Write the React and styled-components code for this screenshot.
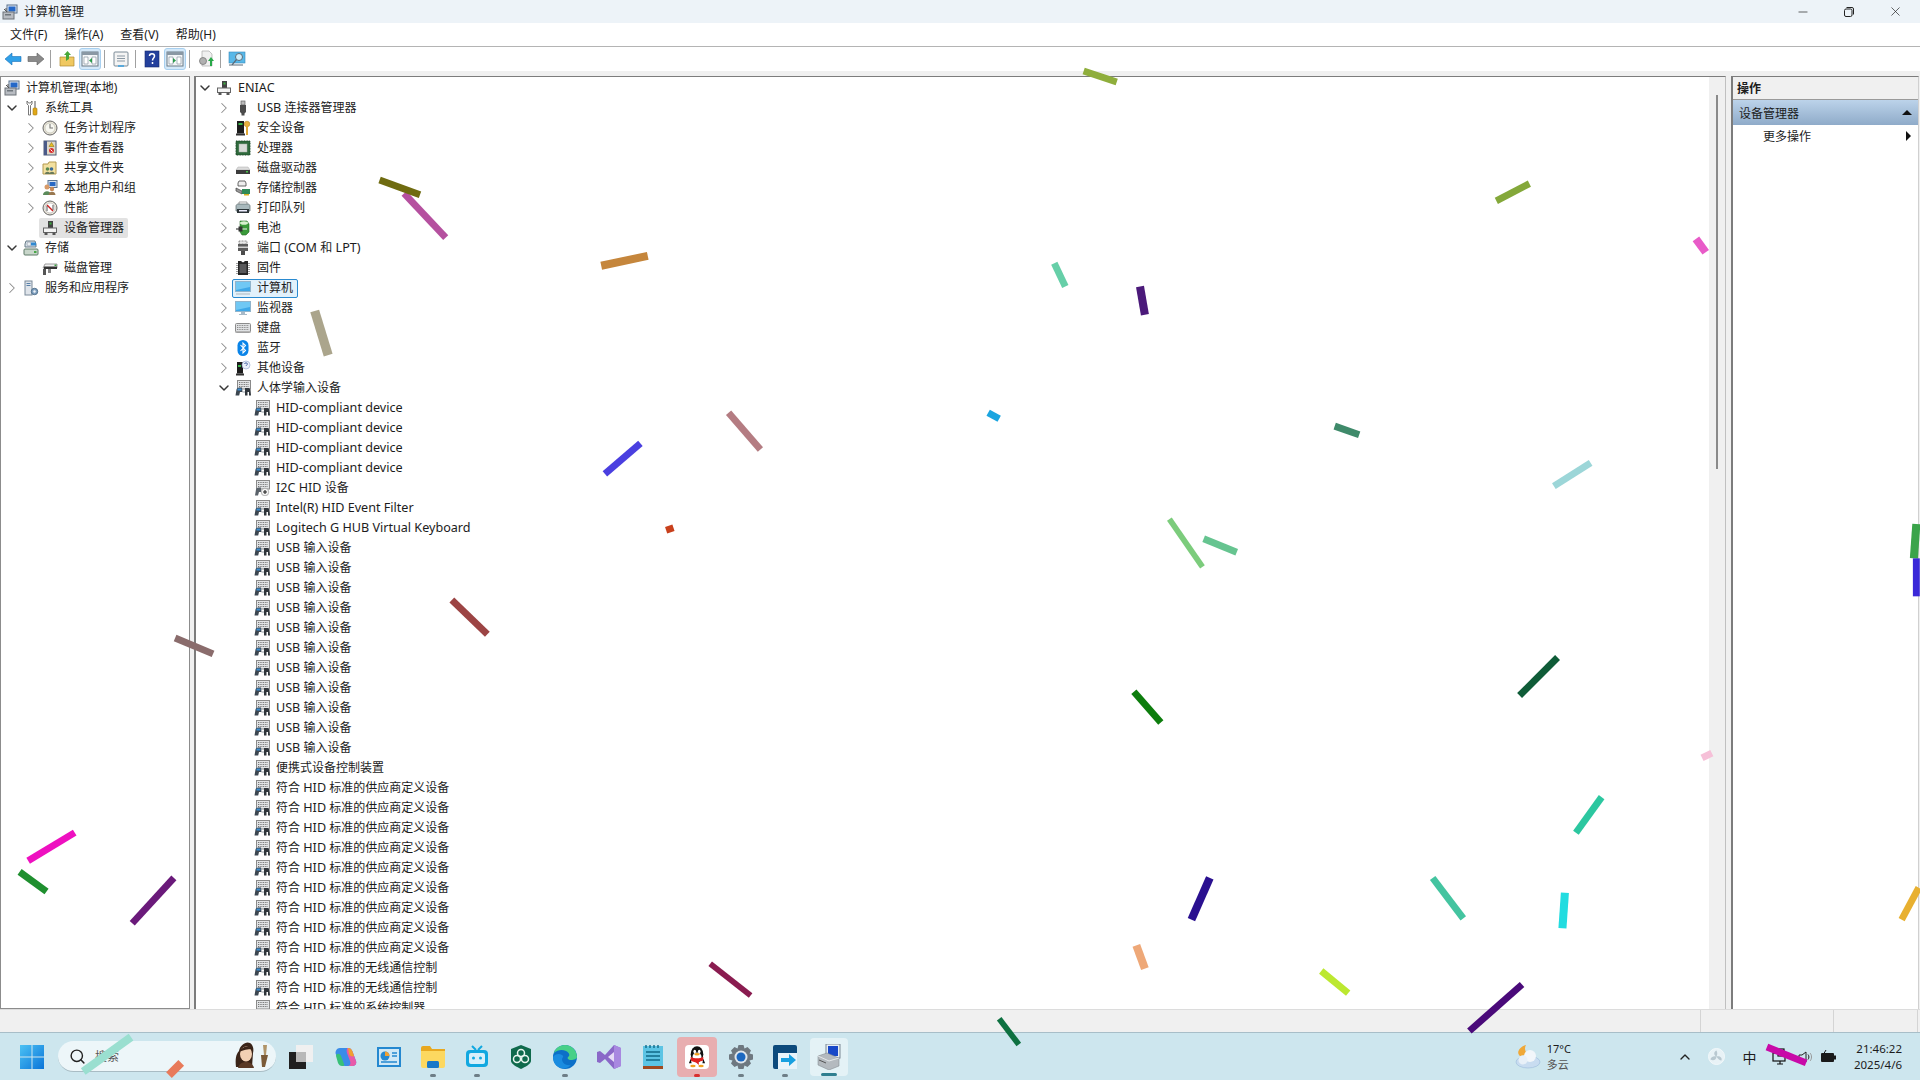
import React from 'react'
import styled, { createGlobalStyle } from 'styled-components'
import { ChevronRight, ChevronDown, ChevronUp, Search, Minus, X } from 'lucide-react'

const FONT = '"Noto Sans", "Noto Sans CJK SC", sans-serif'

const GlobalStyle = createGlobalStyle`
  html, body { margin: 0; padding: 0; width: 1920px; height: 1080px; overflow: hidden; background: #f0f0f0; }
  body { font-family: ${FONT}; font-size: 12px; color: #1c1c1c; }
`

const Svg = ({ size = 16, box = 16, children }) => (
  <svg width={size} height={size} viewBox={`0 0 ${box} ${box}`} style={{ display: 'block', flex: 'none' }}>
    {children}
  </svg>
)

/* ---------- tree icons ---------- */
const MgmtIcon = () => (
  <Svg>
    <rect x="5" y="1" width="10" height="8" fill="#e4eaf2" stroke="#58708c" />
    <rect x="6.500" y="2.500" width="7" height="5" fill="#2468c8" />
    <rect x="1" y="8" width="11" height="7" fill="#b8bcc2" stroke="#6c7278" />
    <rect x="3" y="10" width="6" height="1.500" fill="#6f767c" />
    <path d="M2 5l3 3M4 4v3" stroke="#555" />
  </Svg>
)
const ToolsIcon = () => (
  <Svg>
    <path d="M4 1v3l1.500 1.500V15h2V5.500L9 4V1L7.500 3h-2z" fill="#fff" stroke="#6a6a6a" strokeWidth=".9" />
    <rect x="11" y="1" width="2" height="7" fill="#a8a8a8" />
    <rect x="10" y="8" width="4" height="7" rx="1" fill="#e0a818" stroke="#a57a10" strokeWidth=".6" />
  </Svg>
)
const ClockIcon = () => (
  <Svg>
    <circle cx="8" cy="8" r="7" fill="#e8e4d8" stroke="#666" />
    <circle cx="8" cy="8" r="5" fill="#f8f8f2" stroke="#b8b8a8" strokeWidth=".6" />
    <path d="M8 4v4h3" fill="none" stroke="#777" strokeWidth="1.100" />
  </Svg>
)
const LogIcon = () => (
  <Svg>
    <rect x="2" y="1" width="12" height="14" fill="#ded8c8" stroke="#505c78" />
    <rect x="2" y="1" width="3" height="14" fill="#4a5a88" />
    <path d="M9.500 2.500l2.500 4H7z" fill="#e8c020" stroke="#80660a" strokeWidth=".5" />
    <circle cx="9.500" cy="10.500" r="2.500" fill="#d83030" />
    <path d="M8.500 9.500l2 2" stroke="#fff" />
  </Svg>
)
const SharedIcon = () => (
  <Svg>
    <path d="M1 4h5l1-2h7v12H1z" fill="#f2e0a0" stroke="#b49a50" />
    <circle cx="5.500" cy="9" r="1.800" fill="#5a8a50" />
    <circle cx="9.500" cy="9" r="1.800" fill="#3a6a98" />
    <path d="M3 14c0-3 5-3 5 0zM7.500 14c0-3 5-3 5 0z" fill="#6a7a58" />
  </Svg>
)
const UsersIcon = () => (
  <Svg>
    <rect x="6" y="0.500" width="9" height="7" fill="#d8e2ee" stroke="#5c7694" />
    <rect x="7.500" y="2" width="6" height="4" fill="#2868c4" />
    <circle cx="5" cy="7" r="2.500" fill="#d89a68" />
    <path d="M1 15c0-5 8-5 8 0z" fill="#5a8a5a" />
    <circle cx="10" cy="9" r="2.200" fill="#c88a58" />
    <path d="M6.500 15c0-4.500 7-4.500 7 0z" fill="#987850" />
  </Svg>
)
const PerfIcon = () => (
  <Svg>
    <circle cx="8" cy="8" r="7" fill="#eee8dc" stroke="#666" />
    <circle cx="8" cy="8" r="5" fill="#fff" stroke="#aaa" strokeWidth=".6" />
    <path d="M5 5l6 6" stroke="#d02020" strokeWidth="1.400" />
    <path d="M5 11V6M11 5v5" stroke="#444" strokeWidth=".9" />
  </Svg>
)
const DevMgrIcon = () => (
  <Svg>
    <rect x="6" y="1" width="5" height="7" fill="#444" />
    <rect x="7.500" y="2.500" width="2" height="2" fill="#3cb040" />
    <rect x="1.500" y="8" width="13" height="4.500" fill="#f4f4f4" stroke="#666" />
    <rect x="2.500" y="12.500" width="3" height="2.500" fill="#555" />
    <rect x="10.500" y="12.500" width="3" height="2.500" fill="#555" />
  </Svg>
)
const StorageIcon = () => (
  <Svg>
    <path d="M3 1h9l1 3v3H2V4z" fill="#d4e0e8" stroke="#6a7c88" />
    <circle cx="6" cy="4" r="2" fill="#e8eef2" stroke="#889" strokeWidth=".5" />
    <rect x="8" y="2.500" width="5" height="3" fill="#3088d0" />
    <rect x="1" y="9" width="14" height="6" rx="1" fill="#c8d6ca" stroke="#5f7a68" />
    <rect x="11" y="11" width="2.500" height="2" fill="#48a848" />
  </Svg>
)
const DiskMgmtIcon = () => (
  <Svg>
    <path d="M3 4h12v4H1z" fill="#f2f2f2" stroke="#777" strokeWidth=".7" />
    <rect x="2" y="6.500" width="13" height="2.500" fill="#333" />
    <rect x="12.500" y="4.500" width="2" height="1.500" fill="#3aa040" />
    <rect x="1" y="9" width="3" height="6" fill="#555" />
    <rect x="6" y="9" width="3" height="4" fill="#888" />
  </Svg>
)
const ServicesIcon = () => (
  <Svg>
    <rect x="2" y="1" width="7" height="14" fill="#dfe4ea" stroke="#7a8a9a" />
    <path d="M3.500 3.500h4M3.500 5.500h4" stroke="#5880a8" />
    <circle cx="11.500" cy="11.500" r="3.200" fill="#80a0c0" stroke="#50708c" />
    <circle cx="11.500" cy="11.500" r="1.200" fill="#eef3f8" />
  </Svg>
)
const UsbIcon = () => (
  <Svg>
    <rect x="6" y="1" width="4" height="4" fill="#bbb" stroke="#666" strokeWidth=".7" />
    <path d="M5 5h6v7l-1.500 1.500v2h-3v-2L5 12z" fill="#4c4c4c" />
  </Svg>
)
const SecurityIcon = () => (
  <Svg>
    <rect x="2" y="1" width="7" height="12.500" fill="#1c1c1c" />
    <rect x="3.500" y="3" width="4" height="2" fill="#38b848" />
    <rect x="1" y="13.500" width="9" height="2" fill="#333" />
    <circle cx="12" cy="4" r="2.800" fill="#e8b040" stroke="#a87a18" strokeWidth=".5" />
    <rect x="11" y="6" width="2" height="9" fill="#e0a838" />
  </Svg>
)
const CpuIcon = () => (
  <Svg>
    <rect x="1" y="1" width="14" height="14" fill="#2e6a3c" stroke="#1e4a2a" strokeDasharray="1 .6" />
    <rect x="4" y="4" width="8" height="8" fill="#d8dcd8" stroke="#a8b0a8" strokeWidth=".5" />
  </Svg>
)
const DriveIcon = () => (
  <Svg>
    <path d="M3 7h10l2 3H1z" fill="#dcdcdc" stroke="#aaa" strokeWidth=".5" />
    <rect x="1" y="10" width="14" height="4" fill="#3c3c3c" />
    <rect x="11" y="11" width="2" height="1.500" fill="#48c048" />
  </Svg>
)
const StoreCtrlIcon = () => (
  <Svg>
    <path d="M4 1h6l1 2v3H3V3z" fill="#eee" stroke="#444" strokeWidth=".8" />
    <path d="M1 8l6 3v3l-6-3z" fill="#999" stroke="#444" strokeWidth=".7" />
    <rect x="7" y="9" width="8" height="5" fill="#2f8a58" />
    <rect x="9" y="14" width="5" height="1.500" fill="#d8b020" />
  </Svg>
)
const PrinterIcon = () => (
  <Svg>
    <path d="M4 2h8v3H4z" fill="#fff" stroke="#777" strokeWidth=".7" />
    <path d="M1 6c0-1 1-2 2-2h10c1 0 2 1 2 2v5H1z" fill="#a8b8bc" stroke="#5a686c" strokeWidth=".7" />
    <rect x="2" y="9" width="12" height="4" fill="#2c3438" />
    <rect x="4" y="10" width="8" height="1.500" fill="#eef" />
  </Svg>
)
const BatteryIcon = () => (
  <Svg>
    <path d="M5 1h7l2 3v8l-3 3H7L5 12z" fill="#3a9a3a" stroke="#2a6a2a" strokeWidth=".6" />
    <ellipse cx="9" cy="3" rx="4" ry="1.800" fill="#d8f0d0" />
    <path d="M1 9h3" stroke="#444" strokeWidth="1.200" />
    <path d="M3.500 6.500h4v5h-4z" fill="#333" />
    <path d="M7.500 9H12" stroke="#eee" />
  </Svg>
)
const PortIcon = () => (
  <Svg>
    <rect x="4" y="1" width="8" height="3" fill="#e8e8e8" stroke="#666" strokeWidth=".7" strokeDasharray="1 .5" />
    <rect x="3" y="4" width="10" height="7" fill="#5c5c5c" />
    <rect x="3" y="6.500" width="10" height="1.500" fill="#d0d0d0" />
    <rect x="6" y="11" width="4" height="4" fill="#4c4c4c" />
  </Svg>
)
const FirmwareIcon = () => (
  <Svg>
    <path d="M3 1h3l2 1.500L10 1h3v14H3z" fill="#262626" />
    <rect x="4.500" y="4" width="7" height="9" fill="#58585a" />
    <path d="M2 3v11M14 3v11" stroke="#444" strokeDasharray="1 1" />
  </Svg>
)
const ScreenIcon = ({ base }) => (
  <Svg>
    <rect x="0.500" y="1.500" width="15" height="10" fill="#3ea8e8" stroke="#90b4cc" />
    <path d="M1 2h14v5C10 8 6 9 1 10z" fill="#70c8f4" />
    {base ? (
      <path d="M1 13h14v2H1z" fill="#c8d4dc" />
    ) : (
      <path d="M6 12h4v2h2v1H4v-1h2z" fill="#a8bac8" />
    )}
  </Svg>
)
const KeyboardIcon = () => (
  <Svg>
    <rect x="0.500" y="3.500" width="15" height="9" rx="1" fill="#e0e2e4" stroke="#8c8c8c" />
    <path d="M2 5.500h12M2 7.500h12M2 9.500h12" stroke="#8a8a8a" strokeDasharray="1 .7" />
    <rect x="0.500" y="11" width="15" height="1.500" fill="#b4b4b4" />
  </Svg>
)
const BluetoothIcon = () => (
  <Svg>
    <rect x="2.500" y="0" width="11" height="16" rx="5.500" fill="#0a84e8" />
    <path d="M5.500 5l5 5.500L8 13V3l2.500 2.500-5 5.500" fill="none" stroke="#fff" strokeWidth="1.100" />
  </Svg>
)
const OtherIcon = () => (
  <Svg>
    <rect x="2" y="2" width="6" height="11.500" fill="#1c1c1c" />
    <rect x="3" y="5" width="3" height="2" fill="#38b848" />
    <rect x="1" y="13.500" width="8" height="2" fill="#333" />
    <circle cx="11" cy="5" r="4" fill="#eaf0fa" stroke="#8ea4cc" strokeWidth=".6" />
    <path d="M9.500 4c0-1.500 3-1.500 3 0 0 1-1.500 1-1.500 2" fill="none" stroke="#3a5a9c" strokeWidth=".9" />
  </Svg>
)
const HidIcon = ({ overlay, faded }) => (
  <Svg>
    <rect x="2.500" y="0.500" width="13" height="8.500" fill="#e2e4e6" stroke="#8a8a8a" />
    <path d="M4 2.500h10M4 4.500h10M4 6.500h10" stroke="#777" strokeDasharray="1 .7" />
    {!faded && !overlay && (
      <>
        <path d="M0.500 15.500l1-6c.3-1.300 1.500-2 2.800-2H7l.5 4.500H5l-.8 3.500z" fill="#3c4650" />
        <path d="M2.500 8.500h4v2h-4z" fill="#3f8ed0" />
        <path d="M10 15.500V8h3.500c1 0 1.800.7 2 2l.5 5.500h-2V12h-1.500v3.500z" fill="#30363c" />
        <path d="M7.500 12h2.500" stroke="#9aa2a8" />
      </>
    )}
    {overlay && (
      <>
        <path d="M1 15.500l1-6c.3-1.300 1.500-2 2.800-2H7v4.500H5l-1 3.500z" fill="#5a626a" />
        <circle cx="11" cy="12" r="3.800" fill="#f4f4f4" stroke="#888" strokeWidth=".6" />
        <path d="M9 12h4M11 10v4" stroke="#222" strokeWidth="1.100" />
      </>
    )}
  </Svg>
)

/* ---------- data ---------- */
const leftTree = [
  { label: '计算机管理(本地)', icon: <MgmtIcon />, indent: 3, slot: false },
  { label: '系统工具', icon: <ToolsIcon />, indent: 3, state: 'open' },
  { label: '任务计划程序', icon: <ClockIcon />, indent: 22, state: 'closed' },
  { label: '事件查看器', icon: <LogIcon />, indent: 22, state: 'closed' },
  { label: '共享文件夹', icon: <SharedIcon />, indent: 22, state: 'closed' },
  { label: '本地用户和组', icon: <UsersIcon />, indent: 22, state: 'closed' },
  { label: '性能', icon: <PerfIcon />, indent: 22, state: 'closed' },
  { label: '设备管理器', icon: <DevMgrIcon />, indent: 22, selected: 'gray' },
  { label: '存储', icon: <StorageIcon />, indent: 3, state: 'open' },
  { label: '磁盘管理', icon: <DiskMgmtIcon />, indent: 22 },
  { label: '服务和应用程序', icon: <ServicesIcon />, indent: 3, state: 'closed' },
]

const hid = (label, count = 1) =>
  Array.from({ length: count }, () => ({ label, icon: <HidIcon />, indent: 39 }))

const deviceTree = [
  { label: 'ENIAC', icon: <DevMgrIcon />, indent: 1, state: 'open' },
  { label: 'USB 连接器管理器', icon: <UsbIcon />, indent: 20, state: 'closed' },
  { label: '安全设备', icon: <SecurityIcon />, indent: 20, state: 'closed' },
  { label: '处理器', icon: <CpuIcon />, indent: 20, state: 'closed' },
  { label: '磁盘驱动器', icon: <DriveIcon />, indent: 20, state: 'closed' },
  { label: '存储控制器', icon: <StoreCtrlIcon />, indent: 20, state: 'closed' },
  { label: '打印队列', icon: <PrinterIcon />, indent: 20, state: 'closed' },
  { label: '电池', icon: <BatteryIcon />, indent: 20, state: 'closed' },
  { label: '端口 (COM 和 LPT)', icon: <PortIcon />, indent: 20, state: 'closed' },
  { label: '固件', icon: <FirmwareIcon />, indent: 20, state: 'closed' },
  { label: '计算机', icon: <ScreenIcon base />, indent: 20, state: 'closed', selected: 'blue' },
  { label: '监视器', icon: <ScreenIcon />, indent: 20, state: 'closed' },
  { label: '键盘', icon: <KeyboardIcon />, indent: 20, state: 'closed' },
  { label: '蓝牙', icon: <BluetoothIcon />, indent: 20, state: 'closed' },
  { label: '其他设备', icon: <OtherIcon />, indent: 20, state: 'closed' },
  { label: '人体学输入设备', icon: <HidIcon />, indent: 20, state: 'open' },
  ...hid('HID-compliant device', 4),
  { label: 'I2C HID 设备', icon: <HidIcon overlay />, indent: 39 },
  ...hid('Intel(R) HID Event Filter'),
  ...hid('Logitech G HUB Virtual Keyboard'),
  ...hid('USB 输入设备', 11),
  ...hid('便携式设备控制装置'),
  ...hid('符合 HID 标准的供应商定义设备', 9),
  ...hid('符合 HID 标准的无线通信控制', 2),
  { label: '符合 HID 标准的系统控制器', icon: <HidIcon faded />, indent: 39 },
]

// endpoints measured on the 1568 wide picture
const confetti = [
  [885, 58, 912, 67, 6, '#8fae3c'],
  [330, 158, 364, 194, 6, '#b5509f'],
  [310, 147, 343, 159, 6, '#6f6b10'],
  [1222, 164, 1249, 150, 6, '#84a83a'],
  [1385, 195, 1393, 206, 7, '#e85bc8'],
  [491, 217, 529, 209, 7, '#c5863c'],
  [861, 215, 870, 234, 6, '#66cfa8'],
  [931, 234, 935, 257, 7, '#4b1a7a'],
  [257, 254, 268, 290, 8, '#aba58c'],
  [807, 337, 816, 342, 6, '#1ba5e0'],
  [1090, 348, 1110, 355, 6, '#3f8a6a'],
  [1269, 397, 1299, 378, 6, '#9cd6d8'],
  [595, 337, 621, 367, 6, '#b47c82'],
  [494, 387, 523, 362, 6, '#4a3fe0'],
  [544, 433, 550, 431, 6, '#c8401c'],
  [955, 424, 982, 463, 5, '#7ccc7c'],
  [983, 440, 1010, 451, 6, '#66c490'],
  [1565, 428, 1563, 456, 7, '#3aa44a'],
  [1565, 456, 1565, 487, 6, '#3a28d8'],
  [369, 490, 398, 518, 6, '#9c4444'],
  [143, 521, 174, 534, 6, '#8a6c6c'],
  [1241, 568, 1272, 537, 6, '#0f5c38'],
  [926, 565, 948, 590, 6, '#0d7d0d'],
  [1390, 619, 1398, 615, 6, '#f6c0d8'],
  [1287, 680, 1308, 651, 6, '#2cc7a0'],
  [23, 703, 61, 680, 6, '#ee10c0'],
  [16, 712, 38, 728, 6, '#1f8f2f'],
  [108, 754, 142, 717, 6, '#6a1a7a'],
  [973, 751, 988, 717, 7, '#2a1090'],
  [1170, 717, 1195, 750, 6, '#44c4a0'],
  [1278, 729, 1276, 758, 7, '#22dce0'],
  [1553, 751, 1567, 725, 6, '#e8b030'],
  [928, 772, 935, 791, 7, '#eea878'],
  [1079, 793, 1101, 811, 6, '#bce830'],
  [580, 787, 613, 813, 5, '#8a1c50'],
  [1200, 842, 1243, 804, 6, '#4a0a7a'],
  [816, 832, 832, 853, 5, '#0d7040'],
  [68, 875, 107, 847, 7, '#9adfd0'],
  [138, 878, 148, 868, 7, '#e87a5a'],
  [1443, 855, 1475, 868, 6, '#c80aa8'],
]
const SCALE = 1920 / 1568

/* ---------- chrome ---------- */
// the latin runs of the original font are a little wider than the CJK ones
const Runs = ({ text }) =>
  text.split(/([\x20-\x7e]+)/).filter(Boolean).map((run, i) =>
    /^[\x20-\x7e]+$/.test(run) && /[A-Za-z]/.test(run) ? <Latin key={i}>{run}</Latin> : <span key={i}>{run}</span>
  )

const Row = ({ item }) => (
  <TreeRow $indent={item.indent}>
    {item.slot !== false && (
      <Toggle>
        {item.state === 'open' && <ChevronDown size={16} strokeWidth={2.2} color="#383838" />}
        {item.state === 'closed' && <ChevronRight size={18} strokeWidth={1.4} color="#8c8c8c" />}
      </Toggle>
    )}
    <Item $selected={item.selected}>
      {item.icon}
      <Label><Runs text={item.label} /></Label>
    </Item>
  </TreeRow>
)

const ToolButton = ({ active, children }) => <ToolBtn $active={active}>{children}</ToolBtn>

const PaneIcon = ({ side }) => (
  <Svg box={18} size={18}>
    <rect x="1" y="2" width="16" height="14" fill="#f4f6f8" stroke="#6a7a86" />
    <rect x="1" y="2" width="16" height="3" fill="#8a98a4" />
    <path d="M3 7h4v7H3zM11 7h4v7h-4z" fill="#fff" stroke="#8a98a4" strokeWidth=".7" />
    <path d={side === 'left' ? 'M11 8v5L8 10.500z' : 'M7 8v5l3-2.500z'} fill="#2a9a4a" />
  </Svg>
)

export default function App() {
  return (
    <Screen>
      <GlobalStyle />
      <Window>
        <TitleBar>
          <MgmtIcon />
          <TitleText>计算机管理</TitleText>
          <WinButtons>
            <WinBtn><Minus size={14} strokeWidth={1.2} color="#222" /></WinBtn>
            <WinBtn>
              <svg width="12" height="12" viewBox="0 0 12 12">
                <rect x="1.500" y="3" width="7.500" height="7.500" rx="1.500" fill="none" stroke="#222" />
                <path d="M3.500 1.500h5.500a1.500 1.500 0 0 1 1.500 1.500v5.500" fill="none" stroke="#222" />
              </svg>
            </WinBtn>
            <WinBtn><X size={15} strokeWidth={1.1} color="#222" /></WinBtn>
          </WinButtons>
        </TitleBar>

        <MenuBar>
          {['文件(F)', '操作(A)', '查看(V)', '帮助(H)'].map((m) => (
            <MenuItem key={m}>{m}</MenuItem>
          ))}
        </MenuBar>

        <ToolBar>
          <ToolButton>
            <Svg box={18} size={18}><path d="M1 9l7-6v3.500h9v5H8V15z" fill="#30a0e8" stroke="#1a70b8" strokeWidth=".6" /></Svg>
          </ToolButton>
          <ToolButton>
            <Svg box={18} size={18}><path d="M17 9l-7-6v3.500H1v5h9V15z" fill="#8a8a8a" stroke="#5f5f5f" strokeWidth=".6" /></Svg>
          </ToolButton>
          <Sep />
          <ToolButton>
            <Svg box={18} size={18}>
              <path d="M2 7h14v9H2z" fill="#f0c860" stroke="#b08a30" strokeWidth=".7" />
              <path d="M8 11V5H6l3.500-4L13 5h-2v4z" fill="#48a838" />
            </Svg>
          </ToolButton>
          <ToolButton active><PaneIcon side="left" /></ToolButton>
          <Sep />
          <ToolButton>
            <Svg box={18} size={18}>
              <rect x="2" y="2" width="14" height="14" rx="1" fill="#f4f4f4" stroke="#7a8a96" />
              <path d="M5 6h8M5 8.500h8M5 11h8" stroke="#8a98a4" />
              <path d="M6 16h6" stroke="#38a0e0" strokeWidth="1.500" />
            </Svg>
          </ToolButton>
          <Sep />
          <ToolButton>
            <Svg box={18} size={18}>
              <rect x="2" y="1" width="14" height="16" fill="#24409c" />
              <rect x="2" y="1" width="14" height="16" fill="none" stroke="#142a70" strokeWidth=".6" />
              <path d="M6.500 6c0-3 5-3 5 0 0 2-2 2-2 4.500M9.500 12v2" fill="none" stroke="#fff" strokeWidth="1.500" />
            </Svg>
          </ToolButton>
          <ToolButton active><PaneIcon side="right" /></ToolButton>
          <Sep />
          <ToolButton>
            <Svg box={18} size={18}>
              <path d="M5 1h7l3 3v12H5z" fill="#f0f0f0" stroke="#aaa" strokeWidth=".7" />
              <circle cx="6" cy="11" r="3.500" fill="#b0b0b0" stroke="#777" strokeWidth=".8" />
              <path d="M14 7l3 4h-2v5h-2v-5h-2z" fill="#28a848" />
            </Svg>
          </ToolButton>
          <Sep />
          <ToolButton>
            <Svg box={18} size={18}>
              <rect x="1" y="2" width="16" height="11" fill="#58b8e8" stroke="#3888b8" strokeWidth=".6" />
              <circle cx="11" cy="7" r="3.500" fill="#d0eefa" stroke="#5a6a78" />
              <path d="M8.500 9.500L4 15H1M4 15h11" stroke="#5a6a78" strokeWidth="1.200" fill="none" />
            </Svg>
          </ToolButton>
        </ToolBar>

        <Main>
          <LeftPanel>
            {leftTree.map((item) => <Row key={item.label} item={item} />)}
          </LeftPanel>

          <CenterPanel>
            <DeviceList>
              {deviceTree.map((item, i) => <Row key={i} item={item} />)}
            </DeviceList>
            <ScrollTrack><ScrollThumb /></ScrollTrack>
          </CenterPanel>

          <ActionPanel>
            <ActionTitle>操作</ActionTitle>
            <ActionGroup>
              设备管理器
              <TriUp />
            </ActionGroup>
            <ActionItem>
              更多操作
              <TriRight />
            </ActionItem>
          </ActionPanel>
        </Main>

        <StatusBar>
          <StatusCell $w={133} />
          <StatusCell $w={85} />
        </StatusBar>
      </Window>

      <Taskbar>
        <StartSlot>
          <svg width="24" height="24" viewBox="0 0 24 24">
            <defs>
              <linearGradient id="win" x1="0" y1="0" x2="1" y2="1">
                <stop offset="0" stopColor="#4cc2f4" />
                <stop offset="1" stopColor="#0a74d8" />
              </linearGradient>
            </defs>
            <path d="M0 0h11.500v11.500H0zM12.500 0H24v11.500H12.500zM0 12.500h11.500V24H0zM12.500 12.500H24V24H12.500z" fill="url(#win)" />
          </svg>
        </StartSlot>
        <SearchBox>
          <Search size={17} strokeWidth={2} color="#222" />
          <SearchHint>搜索</SearchHint>
          <SearchArt>
            <svg width="38" height="28" viewBox="0 0 38 28">
              <path d="M2 27c-1-8 0-13 3-16C6 5 12 1 16 3c3 2 4 6 3 10l-1 14z" fill="#3a2418" />
              <ellipse cx="12" cy="14" rx="6" ry="7.500" fill="#f2d0b4" />
              <path d="M5 12c2-5 9-7 13-3-4 0-9 1-13 3z" fill="#3a2418" />
              <path d="M4 28c1-4 4-6 8-6s7 2 8 6z" fill="#5a3a26" />
              <path d="M29 5l4 0-1 10-2 0z" fill="#b09468" />
              <path d="M27 15l7 0-3 12-3 0z" fill="#7a5a38" />
            </svg>
          </SearchArt>
        </SearchBox>

        <TaskViewSlot>
          <svg width="24" height="24" viewBox="0 0 24 24">
            <rect x="7" y="0" width="17" height="17" fill="#f0f0f0" />
            <rect x="0" y="7" width="17" height="17" fill="#202020" />
            <path d="M7 7h10v10H7z" fill="#b8b8b8" />
          </svg>
        </TaskViewSlot>

        <AppSlot>
          <svg width="24" height="24" viewBox="0 0 24 24">
            <path d="M7 3h8c3 0 4 2 5 5l3 8c1 3-1 5-4 5h-7c-3 0-4-2-5-5L4 11C1 8 3 3 7 3z" fill="#3a8ce8" />
            <path d="M15 3c3 0 4 2 5 5l3 8c1 3-1 5-4 5h-5c3 0 4-2 3-5l-3-8c-1-3 0-5 1-5z" fill="#e85aa8" />
            <path d="M3 11c0-3 4-3 5 0l3 8c1 2-1 2-2 2-2 0-3-1-4-3z" fill="#38c078" />
            <path d="M15 3c2 0 4 1 5 5l1 3c-2 1-4 0-5-2z" fill="#f0a030" />
          </svg>
        </AppSlot>
        <AppSlot>
          <svg width="24" height="20" viewBox="0 0 24 20">
            <rect width="24" height="20" fill="#2488d0" />
            <rect x="2" y="2" width="20" height="16" fill="#cfe8f6" />
            <circle cx="8" cy="9" r="4.500" fill="#2488d0" />
            <path d="M8 4.500a4.500 4.500 0 0 1 4.500 4.500H8z" fill="#f0a030" />
            <path d="M15 6h5M15 9h5M4 15h16" stroke="#2488d0" strokeWidth="1.400" />
          </svg>
        </AppSlot>
        <AppSlot>
          <svg width="24" height="22" viewBox="0 0 24 22">
            <path d="M0 2a2 2 0 0 1 2-2h7l2 3h13v4H0z" fill="#e8a820" />
            <path d="M0 5h24v15a2 2 0 0 1-2 2H2a2 2 0 0 1-2-2z" fill="#fcd860" />
            <rect x="6" y="15" width="12" height="7" rx="1.500" fill="#1878c8" />
          </svg>
          <RunDot />
        </AppSlot>
        <AppSlot>
          <svg width="24" height="24" viewBox="0 0 24 24">
            <path d="M7 1l4 4M17 1l-4 4" stroke="#12a8e0" strokeWidth="2" />
            <rect x="1" y="5" width="22" height="17" rx="4" fill="#12a8e0" />
            <rect x="4" y="8" width="16" height="11" rx="2" fill="#d8f0fa" />
            <circle cx="8.500" cy="13" r="1.500" fill="#12a8e0" />
            <circle cx="15.500" cy="13" r="1.500" fill="#12a8e0" />
          </svg>
          <RunDot />
        </AppSlot>
        <AppSlot>
          <svg width="24" height="24" viewBox="0 0 24 24">
            <path d="M12 0l10 4v12c0 3-6 6-10 8-4-2-10-5-10-8V4z" fill="#0f6a4c" />
            <g fill="none" stroke="#eaf6f0" strokeWidth="1.500">
              <circle cx="12" cy="8" r="3.500" />
              <circle cx="8" cy="14" r="3.500" />
              <circle cx="16" cy="14" r="3.500" />
            </g>
          </svg>
        </AppSlot>
        <AppSlot>
          <svg width="24" height="24" viewBox="0 0 24 24">
            <circle cx="12" cy="12" r="12" fill="#0c70c8" />
            <path d="M24 12c0-6-5-12-12-12C6 0 2 4 1 8c3-3 8-4 12-2 4 2 4 5 2 6-1 1 0 3 3 3 3 0 6-1 6-3z" fill="#48d088" />
            <path d="M9 14c0 4 4 7 9 6-3 3-7 4-10 3-5-1-8-6-8-11 2-3 6-4 9-2 2 1 1 2 0 4z" fill="#1a8ce0" />
          </svg>
          <RunDot />
        </AppSlot>
        <AppSlot>
          <svg width="24" height="24" viewBox="0 0 24 24">
            <path d="M17 0l7 3v18l-7 3-9-10-5 4-3-1V7l3-1 5 4z" fill="#8a68c8" />
            <path d="M17 0l7 3v18l-7 3z" fill="#a888e0" />
            <path d="M17 7v10l-6-5z" fill="#e6dcf6" />
          </svg>
        </AppSlot>
        <AppSlot>
          <svg width="20" height="24" viewBox="0 0 20 24">
            <rect y="1" width="20" height="21" fill="#5cc4e4" />
            <path d="M3 0v3M7 0v3M11 0v3M15 0v3" stroke="#106a88" strokeWidth="1.400" />
            <path d="M3 7h14M3 11h14M3 15h14" stroke="#106a88" strokeWidth="1.500" />
            <rect y="21" width="20" height="3" fill="#a04a20" />
          </svg>
        </AppSlot>
        <QqSlot>
          <QqTile>
            <QqFace>
              <svg width="18" height="22" viewBox="0 0 20 24">
                <ellipse cx="10" cy="9" rx="7" ry="9" fill="#111" />
                <ellipse cx="10" cy="12" rx="5" ry="5" fill="#fff" />
                <ellipse cx="7.500" cy="6" rx="1.500" ry="2" fill="#fff" />
                <ellipse cx="12.500" cy="6" rx="1.500" ry="2" fill="#fff" />
                <ellipse cx="10" cy="9" rx="3" ry="1.400" fill="#f0a020" />
                <path d="M3 12c4 2 10 2 14 0v4c-2 1-4 1-5 1v4l-3-3c-3-.5-5-1-6-2z" fill="#e02020" />
                <path d="M3 14l-2 5 3 0zM17 14l2 5-3 0z" fill="#111" />
                <ellipse cx="5.500" cy="22" rx="3" ry="1.500" fill="#f0a020" />
                <ellipse cx="14.500" cy="22" rx="3" ry="1.500" fill="#f0a020" />
              </svg>
            </QqFace>
          </QqTile>
          <RunDot $color="#d83030" />
        </QqSlot>
        <AppSlot>
          <svg width="24" height="24" viewBox="0 0 24 24">
            <path d="M9.500 0h5l1 3.500 3-1.500 3.500 3.500-1.500 3L24 9.500v5l-3.500 1 1.500 3-3.500 3.500-3-1.500-1 3.500h-5l-1-3.500-3 1.500L2 18.500l1.500-3L0 14.500v-5l3.500-1-1.500-3L5.500 2l3 1.500z" fill="#6e7880" />
            <circle cx="12" cy="12" r="6.500" fill="#dfe6ec" />
            <circle cx="12" cy="12" r="4.500" fill="#1c68c0" />
          </svg>
          <RunDot />
        </AppSlot>
        <AppSlot>
          <svg width="24" height="24" viewBox="0 0 24 24">
            <path d="M2 0h20a2 2 0 0 1 2 2v6H5v16H2a2 2 0 0 1-2-2V2a2 2 0 0 1 2-2z" fill="#0c4a7c" />
            <rect x="5" y="8" width="19" height="16" fill="#e8f4fa" />
            <path d="M8 13h8V9l7 6-7 6v-4H8z" fill="#18a0e0" />
          </svg>
          <RunDot />
        </AppSlot>
        <ActiveSlot>
          <ActiveTile>
            <svg width="24" height="26" viewBox="0 0 24 26">
              <rect x="9" y="0" width="14" height="14" fill="#e8eef4" stroke="#7a8894" />
              <rect x="11" y="2" width="10" height="10" fill="#1848c8" />
              <path d="M1 12l9-3 12 5v8l-10 4-11-5z" fill="#b4babf" stroke="#7a8288" strokeWidth=".5" />
              <path d="M1 12l11 5 10-3" fill="none" stroke="#e4e8ea" />
              <path d="M2 16l7 3" stroke="#555" />
            </svg>
          </ActiveTile>
          <ActiveMark />
        </ActiveSlot>

        <Tray>
          <Weather>
            <svg width="26" height="24" viewBox="0 0 26 24">
              <path d="M11 0c-2 3-1 8 3 9l-9 2C1 8 4 2 11 0z" fill="#f0a838" />
              <ellipse cx="13" cy="17" rx="12" ry="6" fill="#c8dcf0" stroke="#9abada" strokeWidth=".6" />
              <circle cx="15" cy="11" r="6" fill="#f2f6fa" />
              <circle cx="8" cy="15" r="4.500" fill="#e8f0f8" />
            </svg>
            <WeatherText>
              <span>17°C</span>
              <WeatherSub>多云</WeatherSub>
            </WeatherText>
          </Weather>
          <TrayIcons>
            <TraySlot $w={32}><ChevronUp size={16} strokeWidth={2} color="#222" /></TraySlot>
            <TraySlot $w={32}>
              <svg width="17" height="17" viewBox="0 0 17 17">
                <circle cx="8.500" cy="8.500" r="8" fill="#e8f2f6" stroke="#f2f8fa" />
                <path d="M8.500 8.500c-3-1-3-5 0-6 1 2 1 4 0 6zm0 0c3-1 6 1 5 4-2 0-4-2-5-4zm0 0c0 3-3 5-6 3 0-2 3-4 6-3z" fill="#b8c8d0" />
              </svg>
            </TraySlot>
            <ImeText>中</ImeText>
            <TraySlot $w={30}>
              <svg width="18" height="18" viewBox="0 0 18 18" fill="none" stroke="#111" strokeWidth="1.200">
                <rect x="1" y="5" width="12" height="8" />
                <rect x="6" y="1" width="6" height="7" fill="#cde6ee" />
                <path d="M5 16h6M8 13v3" />
              </svg>
            </TraySlot>
            <TraySlot $w={20}>
              <svg width="16" height="16" viewBox="0 0 16 16" fill="none" stroke="#222" strokeWidth="1">
                <path d="M1 6v4h3l4 3V3L4 6z" />
                <path d="M10 5.500c1.200 1.500 1.200 3.500 0 5" />
                <path d="M12 4c2 2 2 6 0 8" stroke="#999" />
              </svg>
            </TraySlot>
            <TraySlot $w={26}>
              <svg width="17" height="14" viewBox="0 0 17 14">
                <rect x="1" y="3" width="13" height="9" rx="1" fill="#1a1a1a" />
                <rect x="14" y="5.500" width="2" height="4" fill="#1a1a1a" />
                <path d="M6 0L3 5h2.500L5 8" fill="none" stroke="#1a1a1a" />
              </svg>
            </TraySlot>
          </TrayIcons>
          <Clock>
            <span>21:46:22</span>
            <span>2025/4/6</span>
          </Clock>
        </Tray>
      </Taskbar>

      <ConfettiLayer width="1920" height="1080" viewBox="0 0 1920 1080">
        {confetti.map(([x1, y1, x2, y2, w, c], i) => (
          <line
            key={i}
            x1={x1 * SCALE}
            y1={y1 * SCALE}
            x2={x2 * SCALE}
            y2={y2 * SCALE}
            stroke={c}
            strokeWidth={w * 1.15}
          />
        ))}
      </ConfettiLayer>
    </Screen>
  )
}

const Screen = styled.div`
  position: relative;
  width: 1920px;
  height: 1080px;
  display: flex;
  flex-direction: column;
  overflow: hidden;
`

const Window = styled.div`
  flex: 1;
  min-height: 0;
  display: flex;
  flex-direction: column;
  background: #f0f0f0;
`

const TitleBar = styled.div`
  height: 23px;
  flex: none;
  display: flex;
  align-items: center;
  padding-left: 2px;
  background: #edf3f8;
`

const TitleText = styled.div`
  margin-left: 6px;
  line-height: 20px;
`

const WinButtons = styled.div`
  margin-left: auto;
  display: flex;
  padding-right: 2px;
`

const WinBtn = styled.div`
  width: 46px;
  height: 21px;
  display: flex;
  align-items: center;
  justify-content: center;
`

const MenuBar = styled.div`
  height: 24px;
  flex: none;
  display: flex;
  align-items: center;
  gap: 17px;
  padding-left: 10px;
  background: #fff;
  border-bottom: 1px solid #b4b4b4;
  box-sizing: border-box;
`

const MenuItem = styled.div`
  line-height: 20px;
`

const ToolBar = styled.div`
  height: 24px;
  flex: none;
  display: flex;
  align-items: center;
  gap: 1px;
  padding-left: 2px;
  background: #fff;
  box-sizing: border-box;
`

const ToolBtn = styled.div`
  width: 22px;
  height: 22px;
  box-sizing: border-box;
  display: flex;
  align-items: center;
  justify-content: center;
  border-radius: 3px;
  border: 1px solid ${(p) => (p.$active ? '#a8d0f0' : 'transparent')};
  background: ${(p) => (p.$active ? '#d4e8f8' : 'transparent')};
`

const Sep = styled.div`
  width: 1px;
  height: 18px;
  margin: 0 4px 0 2px;
  background: #a0a0a0;
`

const Main = styled.div`
  flex: 1;
  min-height: 0;
  display: flex;
  padding: 5px 2px 0 0;
  background: #f0f0f0;
  border-bottom: 1px solid #dcdcdc;
`

const LeftPanel = styled.div`
  width: 190px;
  flex: none;
  box-sizing: border-box;
  padding-top: 1px;
  background: #fff;
  border: 1px solid #8c8c8c;
  overflow: hidden;
`

const CenterPanel = styled.div`
  width: 1532px;
  flex: none;
  margin-left: 4px;
  box-sizing: border-box;
  display: flex;
  background: #fff;
  border-left: 2px solid #7c7c7c;
  border-top: 1px solid #7c7c7c;
  border-right: 1px solid #c0c0c0;
  overflow: hidden;
`

const DeviceList = styled.div`
  flex: 1;
  min-width: 0;
  padding-top: 1px;
  overflow: hidden;
`

const ScrollTrack = styled.div`
  width: 16px;
  flex: none;
  background: #f0f0f0;
  padding-top: 18px;
  display: flex;
  justify-content: center;
`

const ScrollThumb = styled.div`
  width: 2px;
  height: 374px;
  background: #8a8a8a;
`

const TreeRow = styled.div`
  height: 20px;
  display: flex;
  align-items: center;
  gap: 3px;
  padding-left: ${(p) => p.$indent}px;
`

const Toggle = styled.div`
  width: 16px;
  height: 16px;
  flex: none;
  display: flex;
  align-items: center;
  justify-content: center;

  svg {
    flex: none;
  }
`

const Item = styled.div`
  display: flex;
  align-items: center;
  gap: 6px;
  height: ${(p) => (p.$selected === 'blue' ? '19px' : '20px')};
  padding: 0 4px 0 ${(p) => (p.$selected === 'blue' ? '2px' : '3px')};
  margin-left: -3px;
  box-sizing: border-box;
  border-radius: 2px;
  border: ${(p) => (p.$selected === 'blue' ? '1px solid #2a8ad0' : '0 solid transparent')};
  background: ${(p) =>
    p.$selected === 'blue' ? '#e2f1fb' : p.$selected === 'gray' ? '#e2e2e2' : 'transparent'};
`

const Label = styled.span`
  line-height: 20px;
  white-space: nowrap;
`

const Latin = styled.span`
  font-size: 12.6px;
`

const ActionPanel = styled.div`
  width: 188px;
  flex: none;
  margin-left: 5px;
  box-sizing: border-box;
  background: #fff;
  border-left: 2px solid #7c7c7c;
  border-top: 1px solid #7c7c7c;
  border-right: 1px solid #d0d0d0;
`

const ActionTitle = styled.div`
  height: 22px;
  display: flex;
  align-items: center;
  padding-left: 4px;
  font-weight: 700;
  background: #f0f0f0;
  border-bottom: 1px solid #9a9a9a;
`

const ActionGroup = styled.div`
  height: 25px;
  display: flex;
  align-items: center;
  justify-content: space-between;
  padding: 0 6px 0 6px;
  background: linear-gradient(#bcd3ea, #8fabc9);
`

const TriUp = styled.span`
  width: 0;
  height: 0;
  border-left: 5px solid transparent;
  border-right: 5px solid transparent;
  border-bottom: 5px solid #111;
`

const ActionItem = styled.div`
  height: 22px;
  display: flex;
  align-items: center;
  justify-content: space-between;
  padding: 0 7px 0 30px;
`

const TriRight = styled.span`
  width: 0;
  height: 0;
  border-top: 5px solid transparent;
  border-bottom: 5px solid transparent;
  border-left: 5px solid #111;
`

const StatusBar = styled.div`
  height: 22px;
  flex: none;
  display: flex;
  justify-content: flex-end;
  padding-right: 2px;
  background: #f0f0f0;
`

const StatusCell = styled.div`
  width: ${(p) => p.$w}px;
  border-left: 1px solid #d4d4d4;
  border-right: ${(p) => (p.$w === 85 ? '1px solid #d4d4d4' : '0')};
  box-sizing: border-box;
`

const Taskbar = styled.div`
  height: 48px;
  flex: none;
  box-sizing: border-box;
  display: flex;
  align-items: center;
  padding-left: 12px;
  background: #cde6ee;
  border-top: 1px solid #a8bec8;
`

const StartSlot = styled.div`
  width: 40px;
  height: 40px;
  display: flex;
  align-items: center;
  justify-content: center;
`

const SearchBox = styled.div`
  width: 218px;
  height: 31px;
  box-sizing: border-box;
  margin-left: 6px;
  display: flex;
  align-items: center;
  padding-left: 11px;
  border-radius: 16px;
  background: #edf6f9;
  border-bottom: 1px solid #a9bcc4;
`

const SearchHint = styled.span`
  margin-left: 9px;
  color: #555;
`

const SearchArt = styled.div`
  margin-left: auto;
  margin-right: 4px;
`

const TaskViewSlot = styled.div`
  width: 44px;
  height: 40px;
  margin-left: 3px;
  display: flex;
  align-items: center;
  justify-content: center;
`

const AppSlot = styled.div`
  position: relative;
  width: 44px;
  height: 40px;
  display: flex;
  align-items: center;
  justify-content: center;
`

const RunDot = styled.span`
  position: absolute;
  bottom: 0;
  left: 50%;
  width: 6px;
  height: 3px;
  margin-left: -3px;
  border-radius: 2px;
  background: ${(p) => p.$color || '#6e7e86'};
`

const QqSlot = styled(AppSlot)``

const QqTile = styled.div`
  width: 40px;
  height: 40px;
  border-radius: 4px;
  background: #e8aeb0;
  display: flex;
  align-items: center;
  justify-content: center;
`

const QqFace = styled.div`
  width: 24px;
  height: 24px;
  border-radius: 4px;
  background: #fff;
  display: flex;
  align-items: center;
  justify-content: center;
  overflow: hidden;
`

const ActiveSlot = styled(AppSlot)``

const ActiveTile = styled.div`
  width: 38px;
  height: 38px;
  border-radius: 4px;
  background: #e4f2f6;
  display: flex;
  align-items: center;
  justify-content: center;
`

const ActiveMark = styled.span`
  position: absolute;
  bottom: 1px;
  left: 50%;
  width: 16px;
  height: 3px;
  margin-left: -8px;
  border-radius: 2px;
  background: #2f7f90;
`

const Tray = styled.div`
  margin-left: auto;
  display: flex;
  align-items: center;
  padding-right: 18px;
`

const Weather = styled.div`
  display: flex;
  align-items: center;
  gap: 6px;
  margin-right: 98px;
`

const WeatherText = styled.div`
  display: flex;
  flex-direction: column;
  font-size: 11px;
  line-height: 16px;
`

const WeatherSub = styled.span`
  color: #555;
`

const TrayIcons = styled.div`
  display: flex;
  align-items: center;
  margin-right: 12px;
`

const TraySlot = styled.div`
  width: ${(p) => p.$w}px;
  display: flex;
  justify-content: center;
`

const ImeText = styled.span`
  width: 33px;
  text-align: center;
  font-size: 14px;
`

const Clock = styled.div`
  display: flex;
  flex-direction: column;
  align-items: flex-end;
  font-size: 11.5px;
  line-height: 16px;
`

const ConfettiLayer = styled.svg`
  position: absolute;
  inset: 0;
  pointer-events: none;
`
